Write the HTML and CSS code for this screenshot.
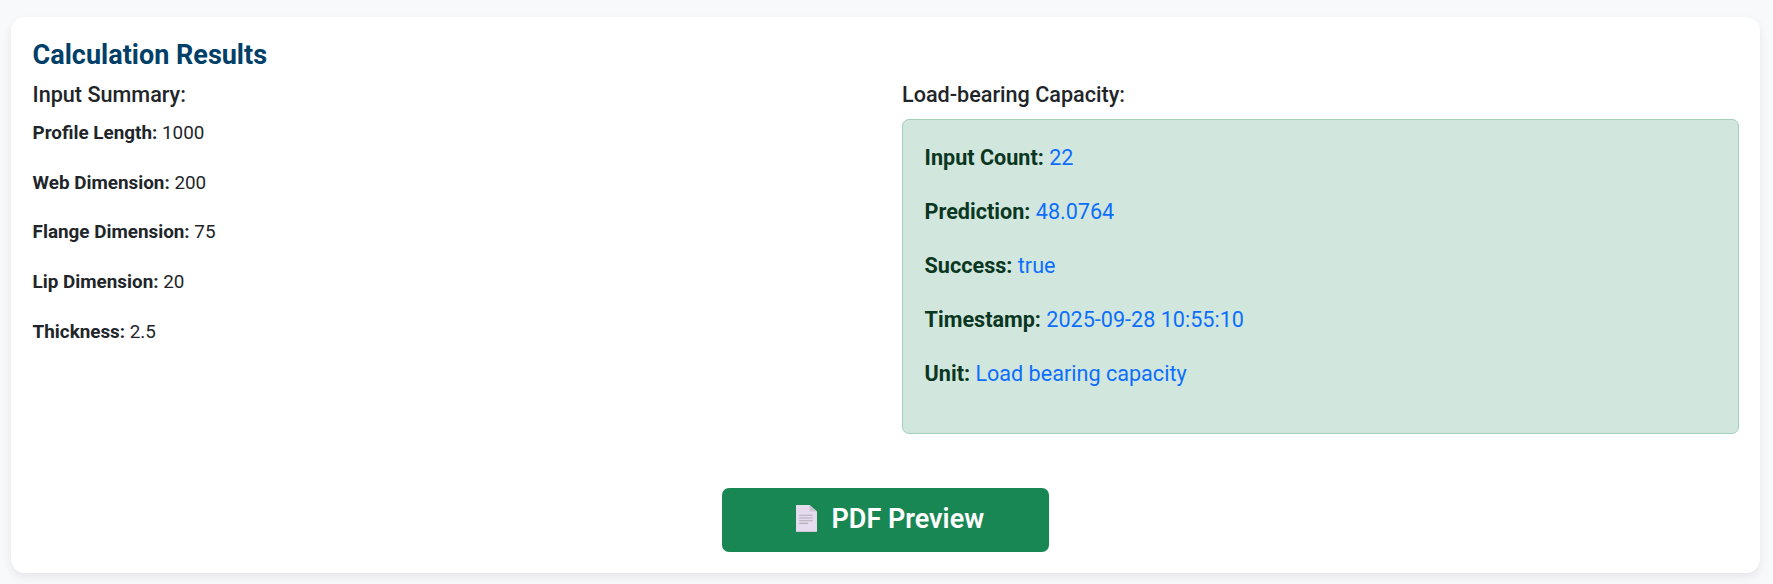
FILE: index.html
```
<!DOCTYPE html>
<html lang="en">
<head>
    <meta charset="UTF-8">
    <meta name="viewport" content="width=device-width, initial-scale=1.0">
    <title>Calculation Results</title>
    <link rel="stylesheet" href="styles.css">
</head>
<body>
    <div class="card">
        <h4 class="card-title">Calculation Results</h4>

        <div class="row">
            <div class="col">
                <h6>Input Summary:</h6>
                <div class="summary">
                    <p><strong>Profile Length:</strong> 1000</p>
                    <p><strong>Web Dimension:</strong> 200</p>
                    <p><strong>Flange Dimension:</strong> 75</p>
                    <p><strong>Lip Dimension:</strong> 20</p>
                    <p><strong>Thickness:</strong> 2.5</p>
                </div>
            </div>
            <div class="col">
                <h6>Load-bearing Capacity:</h6>
                <div class="alert-success">
                    <p><strong>Input Count:</strong> <span class="value">22</span></p>
                    <p><strong>Prediction:</strong> <span class="value">48.0764</span></p>
                    <p><strong>Success:</strong> <span class="value">true</span></p>
                    <p><strong>Timestamp:</strong> <span class="value">2025-09-28 10:55:10</span></p>
                    <p><strong>Unit:</strong> <span class="value">Load bearing capacity</span></p>
                </div>
            </div>
        </div>

        <div class="actions">
            <button type="button" class="btn-preview">
                <svg class="icon" viewBox="0 0 21 27" aria-hidden="true">
                    <path d="M0 0H13.5L21 6.5V27H0Z" fill="#e5dbef"/>
                    <path d="M0 26.2H21V27H0Z" fill="#cdc1d8"/>
                    <path d="M13.5 0L21 6.5H13.5Z" fill="#cdc5d3"/>
                    <path d="M3.3 10.3H16.7M3.3 13H16.7M3.3 15.7H16.7M3.3 18.4H12" fill="none" stroke="#b4abb9" stroke-width="1.1"/>
                </svg>
                <span>PDF Preview</span>
            </button>
        </div>
    </div>
</body>
</html>
```

FILE: styles.css
```
html {
    font-size: 18px;
}
* {
    box-sizing: border-box;
}
body {
    margin: 0;
    padding: 17px 13px 11px 11px;
    background: #f8f9fa;
    color: #212529;
    font-family: Roboto, sans-serif;
}
.card {
    height: 556px;
    padding: 1.2rem 21px 1.2rem 1.2rem;
    background: #fff;
    border-radius: 14px;
    box-shadow: 0 4px 10px rgba(0, 0, 0, 0.08);
}
.card-title {
    margin: 0 0 9px;
    color: #004068;
    font-size: 27px;
    font-weight: 700;
    line-height: 1.2;
}
.row {
    display: grid;
    grid-template-columns: 1fr 1fr;
    gap: 32.4px;
}
h6 {
    margin: 0 0 9px;
    font-size: 1.2rem;
    font-weight: 500;
    line-height: 30px;
}
p {
    margin: 0 0 1rem;
}
.summary {
    margin-top: -1px;
}
.summary p {
    font-size: 18.85px;
    line-height: 31.68px;
}
.alert-success {
    height: 315px;
    padding: 20px 1.2rem;
    border: 1px solid #a3cfbb;
    border-radius: 7px;
    background: #d1e7dd;
    color: #0a3622;
    font-size: 1.2rem;
    line-height: 36px;
}
.value {
    color: #0d6efd;
}
.actions {
    margin-top: 54px;
    text-align: center;
}
.btn-preview {
    display: inline-flex;
    align-items: center;
    justify-content: center;
    width: 327px;
    height: 64px;
    padding: 0 0 2px 9px;
    border: none;
    border-radius: 7px;
    background: #198754;
    color: #fff;
    font-family: inherit;
    font-size: 27px;
    font-weight: 600;
    cursor: pointer;
}
.icon {
    width: 21px;
    height: 27px;
    margin-right: 14px;
}
```
